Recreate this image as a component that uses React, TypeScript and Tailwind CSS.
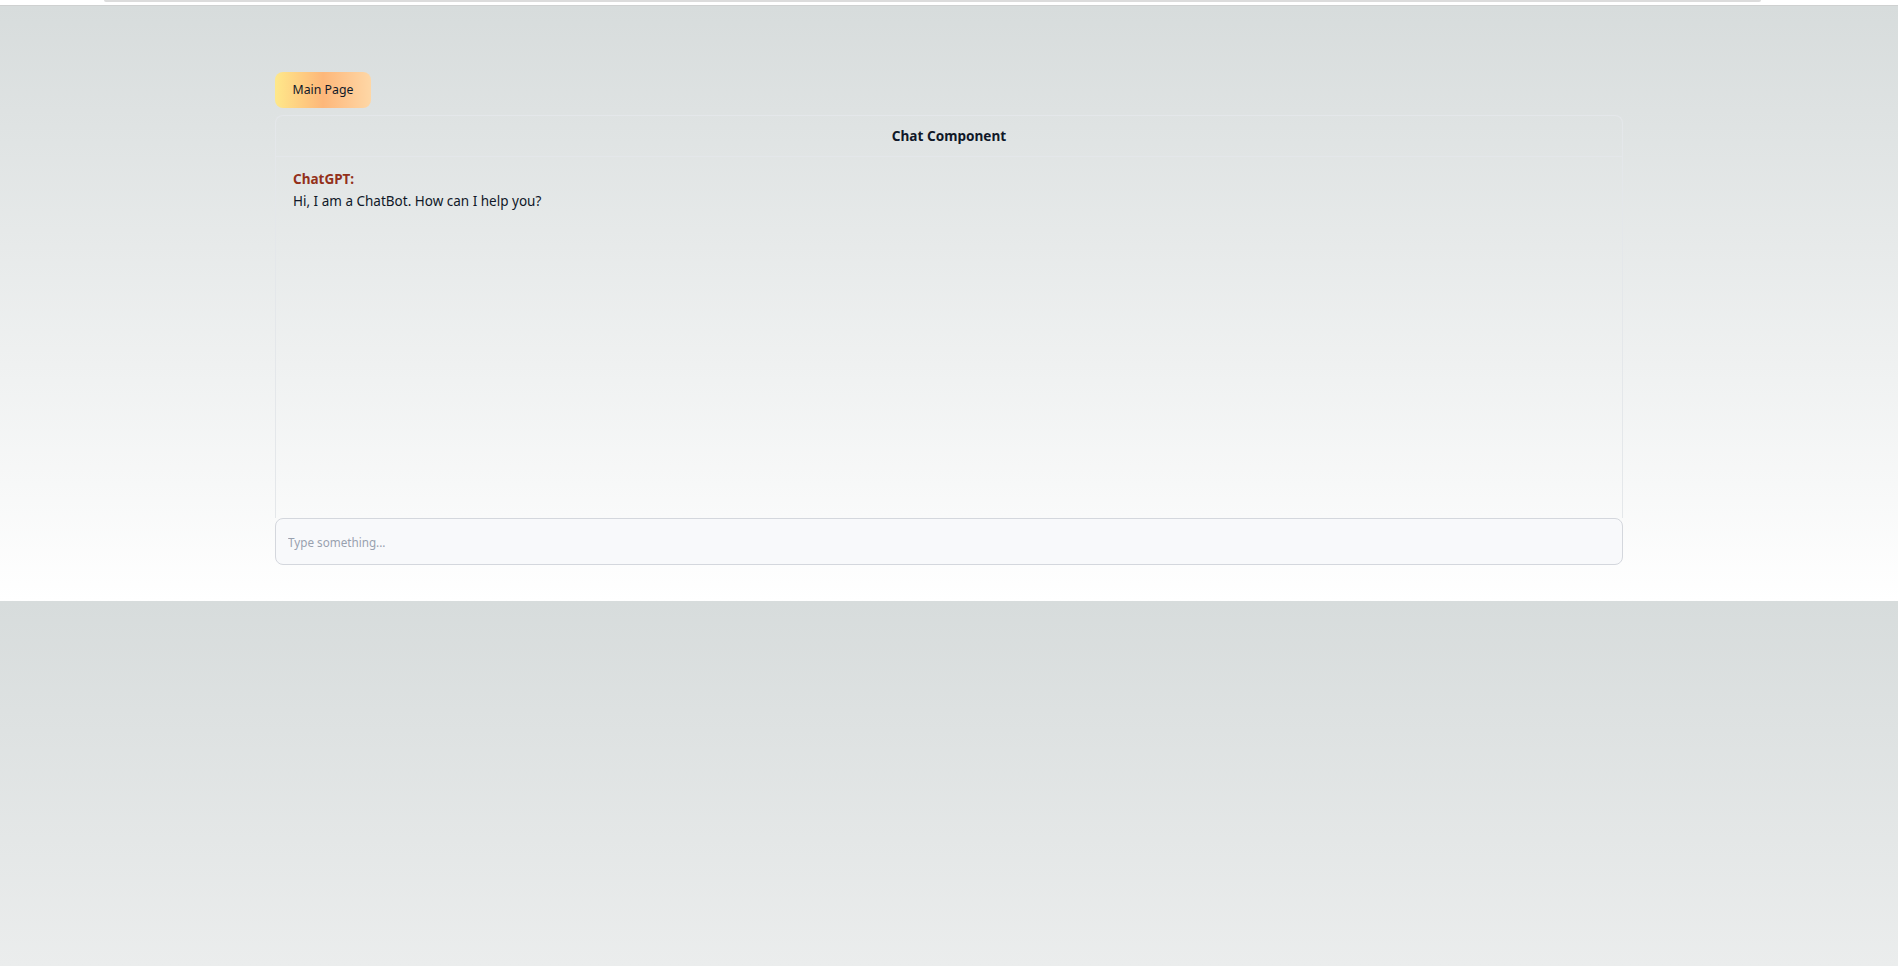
import { useState } from 'react';

// Single message shown when the chat first opens
const messages = [
  { id: 1, author: 'ChatGPT', text: 'Hi, I am a ChatBot. How can I help you?' },
];

export default function App() {
  const [draft, setDraft] = useState('');

  return (
    <div className="min-h-screen flex flex-col font-['Noto_Sans',sans-serif]">
      <div className="h-[6px] bg-white border-b border-[#cfd1d1]">
        <div className="ml-[104px] w-[1657px] h-[2px] bg-[#dcdcdc] rounded-b-sm" />
      </div>

      <section className="bg-gradient-to-b from-[#d7dcdc] to-[#ffffff] pt-[66px] pb-[36px]">
        <div className="mx-auto w-[1348px]">
          <button className="h-[36px] w-[96px] rounded-lg bg-gradient-to-r from-[#fee88a] via-[#fdb77a] to-[#fed7a6] text-[12.3px] text-gray-900">
            Main Page
          </button>

          <div className="mt-[7px] rounded-t-lg border border-b-0 border-[#e4e7ea]">
            <div className="h-[41px] flex items-center justify-center border-b border-[#e4e7ea] text-[13.6px] font-bold text-gray-900">
              Chat Component
            </div>
            <div className="h-[361px] px-[17px] pt-[11px] text-[13.5px] leading-[22px] text-gray-900">
              {messages.map((m) => (
                <div key={m.id}>
                  <div className="font-bold text-[#93301a]">{m.author}:</div>
                  <div>{m.text}</div>
                </div>
              ))}
            </div>
          </div>

          <div className="rounded-lg border border-[#d4d7dd] bg-[#f8f9fb]">
            <input
              value={draft}
              onChange={(e) => setDraft(e.target.value)}
              placeholder="Type something..."
              className="w-full h-[45px] bg-transparent px-3 text-[11.7px] text-gray-800 placeholder:text-gray-400 outline-none"
            />
          </div>
        </div>
      </section>

      <div className="flex-1 bg-gradient-to-b from-[#d7dcdc] to-[#ebeded]" />
    </div>
  );
}
